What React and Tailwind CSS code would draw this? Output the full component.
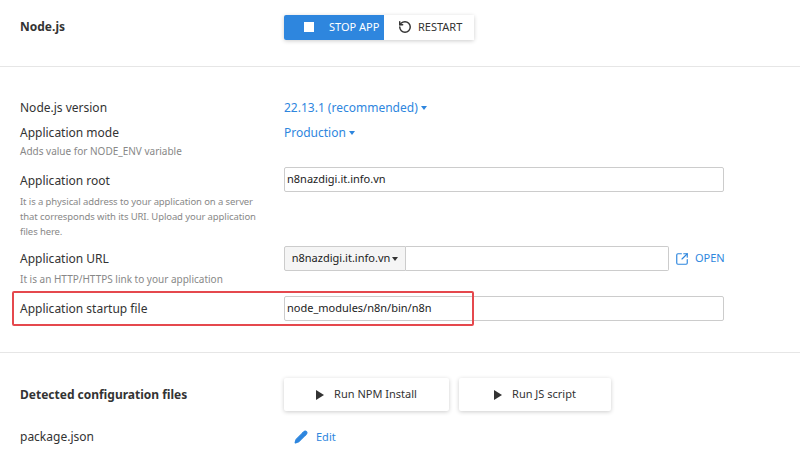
import { RotateCcw, SquareArrowOutUpRight, Pencil } from "lucide-react";

function Caret() {
  return <span className="inline-block ml-[3px] mb-[2px] border-x-[3px] border-x-transparent border-t-[4px] border-t-[#2e86de] align-middle" />;
}

function Play() {
  return <span className="inline-block border-y-[5px] border-y-transparent border-l-[8px] border-l-[#333]" />;
}

export default function App() {
  return (
    <div className="w-[800px] h-[470px] bg-white overflow-hidden text-[12px] text-[#333]" style={{ fontFamily: '"Noto Sans", "Open Sans", sans-serif' }}>
      {/* header */}
      <div className="flex items-center h-[67px] pl-[20px] border-b border-[#e6e6e6]">
        <div className="w-[264px] font-bold pb-[12px]">Node.js</div>
        <div className="flex shadow-[0_1px_4px_rgba(0,0,0,0.2)] rounded-[2px] mb-[12px]">
          <button className="flex items-center gap-[15px] h-[25px] w-[100px] pl-[20px] bg-[#2e86de] text-white text-[11px] rounded-l-[2px]">
            <span className="w-[10px] h-[10px] bg-white" />STOP APP
          </button>
          <button className="flex items-center gap-[6px] h-[25px] w-[90px] pl-[14px] bg-white text-[#333] text-[11px]">
            <RotateCcw size={14} strokeWidth={2.5} />RESTART
          </button>
        </div>
      </div>

      <div className="pl-[20px] pt-[32px] border-b border-[#e6e6e6] h-[286px]">
        <div className="flex items-center h-[18px]">
          <div className="w-[264px]">Node.js version</div>
          <div className="text-[#2e86de]">22.13.1 (recommended)<Caret /></div>
        </div>
        <div className="flex items-center h-[18px] mt-[7px]">
          <div className="w-[264px]">Application mode</div>
          <div className="text-[#2e86de]">Production<Caret /></div>
        </div>
        <div className="text-[10px] text-[#888] mt-[2px]">Adds value for NODE_ENV variable</div>

        <div className="flex mt-[8px]">
          <div className="w-[264px] pt-[5px]">
            <div>Application root</div>
            <div className="text-[9.5px] text-[#888] leading-[15px] mt-[4px] w-[250px] tracking-[-0.1px]">It is a physical address to your application on a server that corresponds with its URI. Upload your application files here.</div>
          </div>
          <div className="w-[440px] h-[25px] border border-[#ccc] rounded-[2px] px-[2px] flex items-center text-[11px] text-[#222]">n8nazdigi.it.info.vn</div>
        </div>

        <div className="flex mt-[7px]">
          <div className="w-[264px] pt-[4px]">
            <div>Application URL</div>
            <div className="text-[10px] text-[#888] mt-[4px]">It is an HTTP/HTTPS link to your application</div>
          </div>
          <div className="flex h-[25px]">
            <div className="w-[122px] border border-[#ccc] bg-[#f5f5f5] rounded-l-[2px] flex items-center justify-center text-[11px] text-[#222]">n8nazdigi.it.info.vn<span className="inline-block ml-[2px] border-x-[3px] border-x-transparent border-t-[4px] border-t-[#333]" /></div>
            <div className="w-[263px] border border-l-0 border-[#ccc] rounded-r-[2px]" />
            <div className="flex items-center gap-[6px] ml-[6px] text-[#2e86de] text-[11px]">
              <SquareArrowOutUpRight size={14} />OPEN
            </div>
          </div>
        </div>

        <div className="relative flex items-center mt-[4px] h-[35px]">
          <div className="absolute left-[-8px] top-0 w-[462px] h-[35px] border-2 border-[#e5484d] rounded-[2px]" />
          <div className="w-[264px]">Application startup file</div>
          <div className="w-[440px] h-[25px] border border-[#ccc] rounded-[2px] px-[2px] flex items-center text-[11px] text-[#222]">node_modules/n8n/bin/n8n</div>
        </div>
      </div>

      <div className="pl-[20px] pt-[25px]">
        <div className="flex items-center">
          <div className="w-[264px] font-bold">Detected configuration files</div>
          <div className="flex gap-[10px]">
            <button className="flex items-center justify-center gap-[10px] w-[165px] h-[33px] bg-white shadow-[0_1px_4px_rgba(0,0,0,0.2)] rounded-[2px] text-[11px] text-[#333]"><Play />Run NPM Install</button>
            <button className="flex items-center justify-center gap-[10px] w-[152px] h-[33px] bg-white shadow-[0_1px_4px_rgba(0,0,0,0.2)] rounded-[2px] text-[11px] text-[#333]"><Play />Run JS script</button>
          </div>
        </div>
        <div className="flex items-center mt-[17px]">
          <div className="w-[264px]">package.json</div>
          <div className="flex items-center gap-[8px] ml-[10px] text-[#2e86de] text-[11px]">
            <Pencil size={14} fill="#2e86de" />Edit
          </div>
        </div>
      </div>
    </div>
  );
}
